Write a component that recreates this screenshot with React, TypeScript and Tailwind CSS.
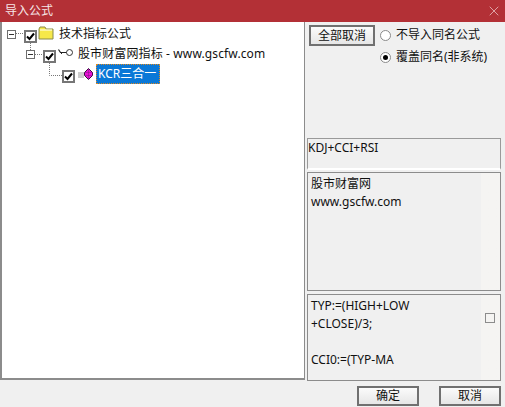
import React from "react";
import { X } from "lucide-react";

const FONT = "font-['Noto_Sans','Noto_Sans_CJK_SC',sans-serif]";

// 树节点复选框
function Check() {
  return (
    <div className="w-[13px] h-[13px] shrink-0 border-2 border-[#767676] bg-white flex items-center justify-center">
      <svg width="9" height="9" viewBox="0 0 9 9">
        <path d="M1 4.5 L3.5 7 L8 1.5" fill="none" stroke="#000" strokeWidth="2" />
      </svg>
    </div>
  );
}

// 展开/折叠按钮
function Expander() {
  return (
    <div className="w-[9px] h-[9px] shrink-0 border border-[#6e6e6e] bg-white flex items-center justify-center">
      <div className="w-[5px] h-px bg-[#333]" />
    </div>
  );
}

function Folder() {
  return (
    <svg width="16" height="14" viewBox="0 0 16 14" className="shrink-0">
      <path d="M1 3 L2 1 L7 1 L8 3 L15 3 L15 13 L1 13 Z" fill="#f6e84a" stroke="#8a8a4a" />
      <path d="M2 4 H14" stroke="#fff" />
    </svg>
  );
}

function KeyIcon() {
  return (
    <svg width="15" height="9" viewBox="0 0 15 9" className="shrink-0">
      <path d="M0.5 1.5 L2.5 4.5 H9" fill="none" stroke="#222" strokeWidth="1.2" />
      <path d="M2.5 4.5 L4 6" fill="none" stroke="#222" />
      <circle cx="11.5" cy="4.5" r="3" fill="#fff" stroke="#333" />
    </svg>
  );
}

function Gem() {
  return (
    <svg width="16" height="12" viewBox="0 0 16 12" className="shrink-0">
      <path d="M1 5 H7 M1 7 H7 M1 9 H7" stroke="#9a9a9a" />
      <path d="M11.5 0.5 L15.5 4.5 L15.5 7.5 L11.5 11.5 L7.5 7.5 L7.5 4.5 Z" fill="#ee10d8" stroke="#3c1044" />
      <path d="M7.5 4.5 H15.5 M7.5 7.5 H15.5 M11.5 1 V11" stroke="#7a1a80" strokeWidth="0.5" />
    </svg>
  );
}

function Radio({ checked, label }: { checked?: boolean; label: string }) {
  return (
    <div className="flex items-center h-[22px]">
      <div className="w-[11px] h-[11px] rounded-full border border-[#8a8a8a] bg-white flex items-center justify-center">
        {checked && <div className="w-[5px] h-[5px] rounded-full bg-black" />}
      </div>
      <span className="ml-[5px] whitespace-nowrap">{label}</span>
    </div>
  );
}

function Button({ label, className }: { label: string; className: string }) {
  return (
    <button className={`border-2 border-[#707070] bg-gradient-to-b from-[#fbfbfb] to-[#e6e6e6] flex items-center justify-center ${className}`}>
      {label}
    </button>
  );
}

export default function App() {
  return (
    <div className={`w-[505px] h-[407px] flex flex-col bg-[#f0f0f0] text-[12px] leading-[18px] text-[#111] overflow-hidden ${FONT}`}>
      {/* 标题栏 */}
      <div className="h-[22px] shrink-0 bg-[#b33036] flex items-center justify-between pl-[5px] pr-[3px] text-[#f6e6e6]">
        <span>导入公式</span>
        <X size={16} strokeWidth={1} color="#f4dcdc" />
      </div>

      <div className="flex h-[358px] border-l-2 border-[#8c8c8c]">
        {/* 左侧树 */}
        <div className="relative w-[303px] shrink-0 bg-white border-r border-b-2 border-[#8c8c8c] pt-[2px]">
          <div className="h-5 flex items-center pl-[5px]">
            <Expander />
            <div className="ml-[8px] mt-[4px]"><Check /></div>
            <div className="ml-[1px] -mt-[2px]"><Folder /></div>
            <span className="ml-[5px]">技术指标公式</span>
          </div>
          <div className="h-5 flex items-center pl-[24px]">
            <Expander />
            <div className="ml-[8px] mt-[4px]"><Check /></div>
            <div className="ml-[2px] -mt-[3px]"><KeyIcon /></div>
            <span className="ml-[5px] whitespace-nowrap tracking-[0.12px]">股市财富网指标 - www.gscfw.com</span>
          </div>
          <div className="h-5 flex items-center pl-[60px]">
            <div className="mt-[4px]"><Check /></div>
            <div className="ml-[2px]"><Gem /></div>
            <span className="ml-[3px] w-[64px] h-5 flex items-center pl-[1px] bg-[#0a78d7] text-white border border-dotted border-[#e08a20] whitespace-nowrap">KCR三合一</span>
          </div>

          {/* 连接虚线 */}
          <svg width="80" height="70" className="absolute left-0 top-0 pointer-events-none">
            <path d="M14 11.5 H22 M28.5 21 V28 M33 32.5 H41 M47.5 41 V53.5 H60" fill="none" stroke="#777" strokeDasharray="1 1" />
          </svg>
        </div>

        {/* 右侧面板 */}
        <div className="flex-1 min-w-0 flex flex-col pl-[2px] pr-[4px]">
          <div className="h-[116px] shrink-0 flex items-start pt-[3px] pl-[2px]">
            <Button label="全部取消" className="w-[66px] h-[21px] shrink-0" />
            <div className="ml-[5px] -mt-[1px] flex flex-col">
              <Radio label="不导入同名公式" />
              <Radio checked label="覆盖同名(非系统)" />
            </div>
          </div>
          <div className="h-[32px] shrink-0 w-[194px] border-t border-l border-r border-[#9a9a9a] border-b-2 border-b-white leading-[18px]">
            KDJ+CCI+RSI
          </div>
          <div className="mt-[2px] h-[119px] shrink-0 border border-[#8c8c8c] pl-[3px] pt-[2px] bg-gradient-to-r from-[#f0f0f0] from-[90%] to-[#f5f4f2] to-[90%] leading-[18px]">
            <div>股市财富网</div>
            <div>www.gscfw.com</div>
          </div>
          <div className="relative mt-[3px] h-[87px] shrink-0 border border-[#8c8c8c] pl-[3px] pt-[2px] bg-gradient-to-r from-[#f0f0f0] from-[90%] to-[#f5f4f2] to-[90%] leading-[18px]">
            <div>TYP:=(HIGH+LOW</div>
            <div>+CLOSE)/3;</div>
            <div className="h-[18px]" />
            <div>CCI0:=(TYP-MA</div>
            <div className="absolute right-[5px] top-[18px] w-[10px] h-[10px] border border-[#8c8c8c]" />
          </div>
        </div>
      </div>

      {/* 底部按钮 */}
      <div className="flex-1 flex justify-end items-start pt-[6px] pr-[4px] gap-5">
        <Button label="确定" className="w-[62px] h-[20px]" />
        <Button label="取消" className="w-[62px] h-[20px]" />
      </div>
    </div>
  );
}
